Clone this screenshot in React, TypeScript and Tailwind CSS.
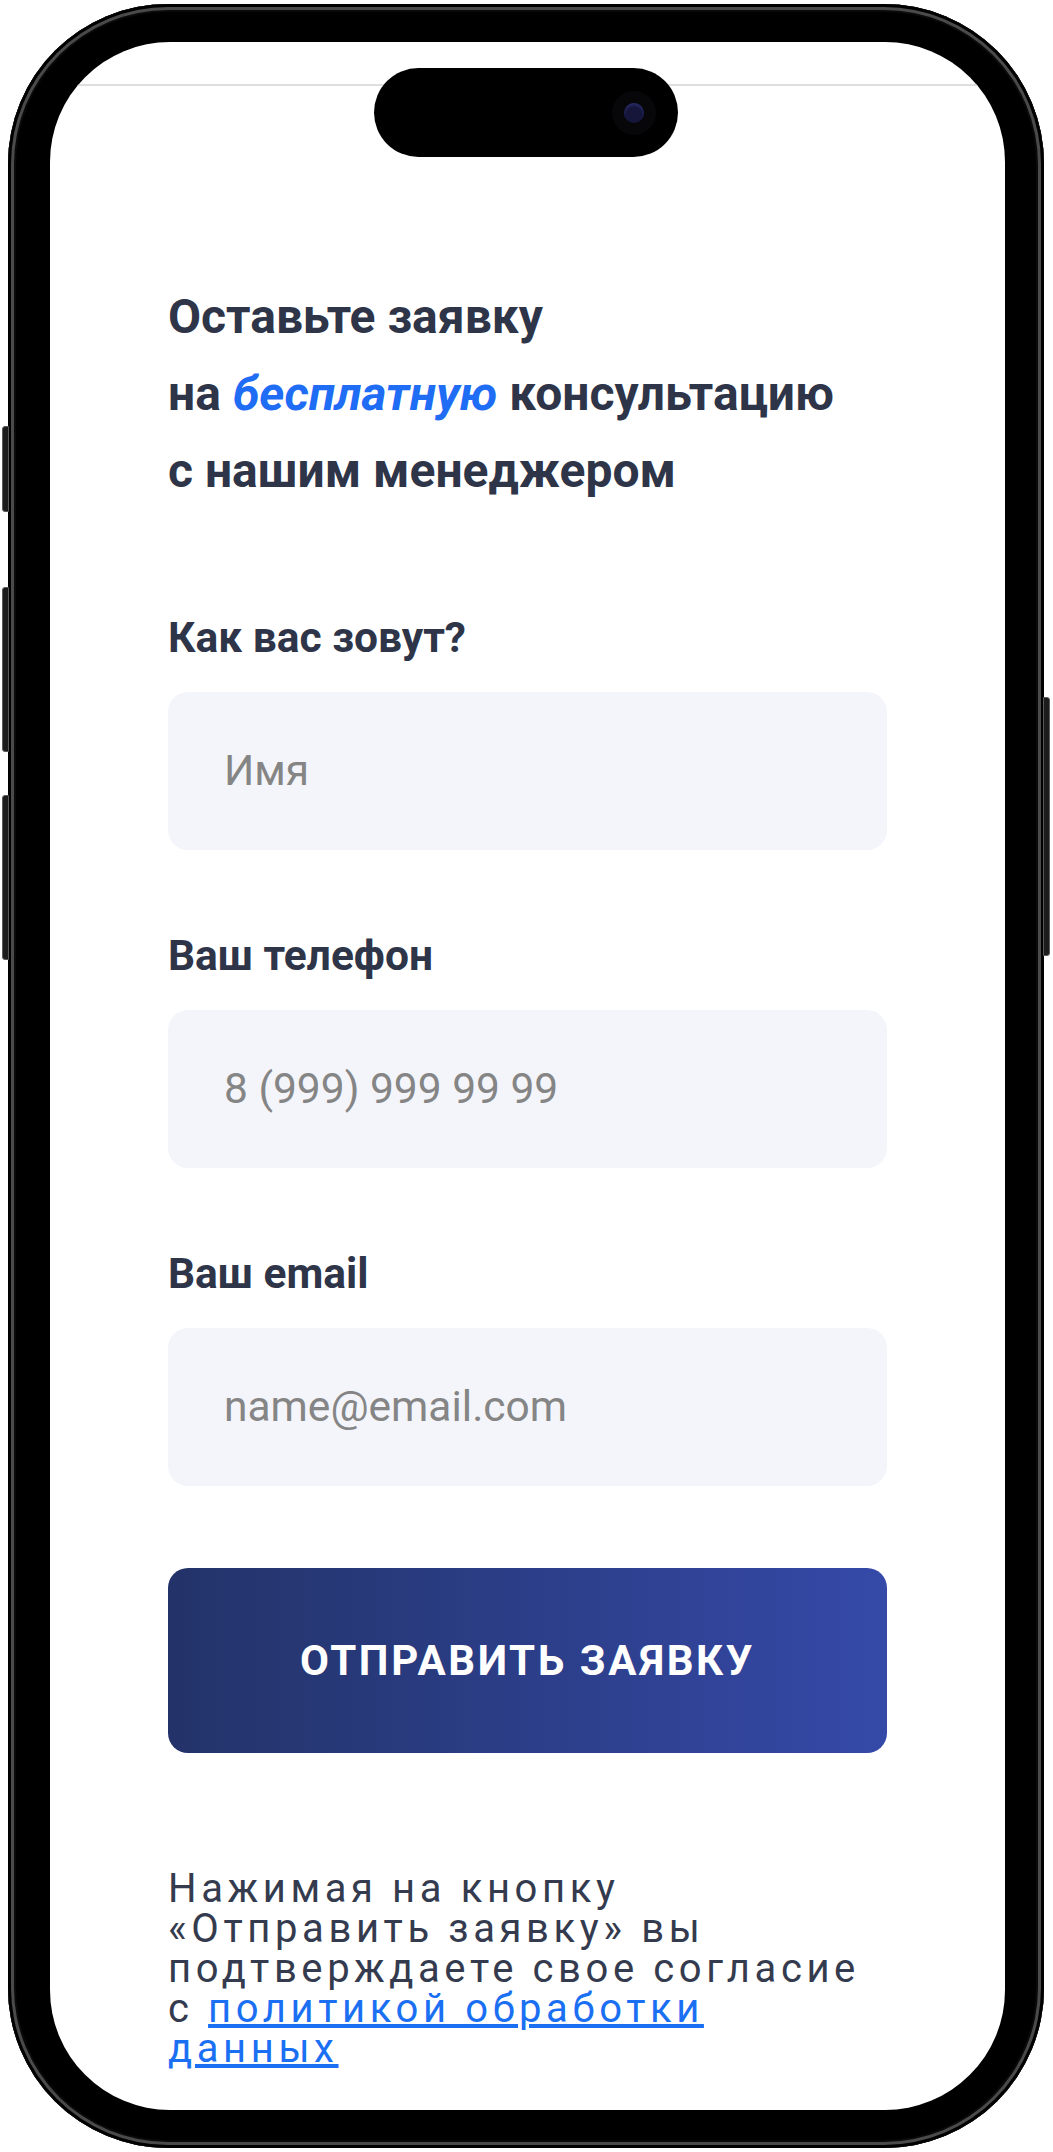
import React from "react";

export default function App() {
  return (
    <div
      className="w-[1053px] h-[2152px] bg-white relative"
      style={{ fontFamily: "Roboto, 'Liberation Sans', sans-serif" }}
    >
      <div className="absolute left-[8px] top-[4px] w-[1036px] h-[2144px]">
        {/* side buttons */}
        <div className="absolute left-[-6px] top-[422px] w-[7px] h-[86px] rounded-l-[3px] bg-[#1c1c1c] border border-[#5a5a5a]" />
        <div className="absolute left-[-6px] top-[583px] w-[7px] h-[165px] rounded-l-[3px] bg-[#1c1c1c] border border-[#5a5a5a]" />
        <div className="absolute left-[-6px] top-[791px] w-[7px] h-[165px] rounded-l-[3px] bg-[#1c1c1c] border border-[#5a5a5a]" />
        <div className="absolute left-[1035px] top-[693px] w-[7px] h-[259px] rounded-r-[3px] bg-[#1c1c1c] border border-[#5a5a5a]" />

        {/* body */}
        <div className="w-full h-full rounded-[160px] bg-black shadow-[inset_0_0_0_3px_#000,inset_0_0_0_6px_#4a4a4a,inset_0_0_0_8px_#0a0a0a] pl-[42px] pr-[31px] pt-[38px] pb-[38px]">
          <div className="relative w-[955px] h-[2068px] bg-white rounded-[120px] overflow-hidden">
            {/* dynamic island */}
            <div className="absolute left-[324px] top-[26px] w-[304px] h-[89px] rounded-full bg-black z-10 flex items-center justify-end pr-[22px]">
              <div className="w-[44px] h-[44px] rounded-full bg-[#070709] flex items-center justify-center">
                <div className="w-[20px] h-[20px] rounded-full bg-[#15163a] shadow-[inset_0_2px_3px_#2a2d6a]" />
              </div>
            </div>

            <div className="pt-[42px]">
              <div className="h-[2px] bg-[#dedede]" />
            </div>

            <div className="px-[118px] pt-[192px]">
              <h1 className="text-[48px] leading-[77px] font-bold text-[#2f3549]">
                Оставьте заявку
                <br />
                на <em className="italic text-[#1f6cf5]">бесплатную</em> консультацию
                <br />
                с нашим менеджером
              </h1>

              <div className="mt-[105px] flex flex-col gap-[82px]">
                {[
                  { label: "Как вас зовут?", ph: "Имя" },
                  { label: "Ваш телефон", ph: "8 (999) 999 99 99" },
                  { label: "Ваш email", ph: "name@email.com" },
                ].map((f) => (
                  <div key={f.label} className="flex flex-col gap-[30px]">
                    <label className="text-[42.5px] leading-[48px] font-bold text-[#2f3549]">
                      {f.label}
                    </label>
                    <div className="h-[158px] rounded-[20px] bg-[#f4f5fa] flex items-center pl-[56px] text-[42.5px] text-[#858585]">
                      {f.ph}
                    </div>
                  </div>
                ))}
              </div>

              <button className="mt-[82px] w-full h-[185px] rounded-[20px] bg-gradient-to-r from-[#233369] to-[#3549a8] text-white text-[42px] font-bold tracking-[2.6px] flex items-center justify-center">
                ОТПРАВИТЬ ЗАЯВКУ
              </button>

              <p className="mt-[116px] text-[40px] leading-[40px] tracking-[4.6px] text-[#353b4e] whitespace-nowrap">
                Нажимая на кнопку
                <br />
                «Отправить заявку» вы
                <br />
                подтверждаете свое согласие
                <br />
                с{" "}
                <a href="#" className="text-[#1a6ff2] underline">
                  политикой обработки
                  <br />
                  данных
                </a>
              </p>
            </div>
          </div>
        </div>
      </div>
    </div>
  );
}
